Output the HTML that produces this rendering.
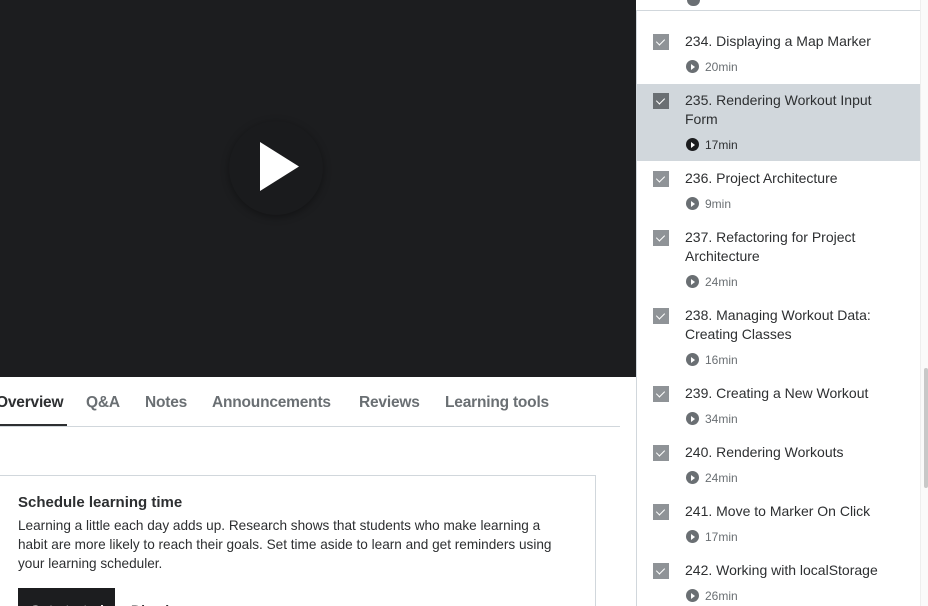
<!DOCTYPE html>
<html><head><style>
*{margin:0;padding:0;box-sizing:border-box}
html,body{width:928px;height:606px;overflow:hidden}
body{background:#fff;font-family:"Liberation Sans",sans-serif;color:#2d2f31}
#w{position:relative;width:928px;height:606px;overflow:hidden}
.a{position:absolute;white-space:nowrap}
.video{left:0;top:0;width:636px;height:377px;background:#1c1d1f}
.pc{left:229px;top:121px;width:94px;height:94px;border-radius:50%;background:#1a1b1d;box-shadow:0 2px 8px rgba(0,0,0,.35)}
.tab{top:394px;font-size:15.5px;font-weight:bold;color:#6a6f73;letter-spacing:-0.2px}
.side{left:636px;top:10px;width:285px;height:596px;border-left:1px solid #d1d7dc;border-top:1px solid #d1d7dc}
.cb{position:absolute;left:653px;width:16px;height:16px;background:#8f9397}
.cb:after{content:"";position:absolute;left:5px;top:3px;width:4px;height:7px;border:solid #fff;border-width:0 1.2px 1.2px 0;transform:rotate(45deg)}
.t{left:685px;font-size:14px;line-height:19px;color:#2d2f31;white-space:normal;width:200px}
.d{left:686px;font-size:12px;color:#6a6f73}
.d i{display:inline-block;width:13px;height:13px;border-radius:50%;background:#6a6f73;vertical-align:-2px;margin-right:6px;position:relative}
.d i:after{content:"";position:absolute;left:5px;top:3.5px;border-left:4.5px solid #fff;border-top:3px solid transparent;border-bottom:3px solid transparent}
</style></head><body><div id="w">
<div class="a video"></div>
<div class="a pc"></div>
<svg class="a" style="left:260px;top:142px" width="40" height="50"><polygon points="0,0 39,24.5 0,49" fill="#fff"/></svg>

<div class="a tab" style="left:-4px;color:#2d2f31">Overview</div>
<div class="a" style="left:0;top:424px;width:67px;height:2px;background:#2d2f31"></div>
<div class="a tab" style="left:86px">Q&amp;A</div>
<div class="a tab" style="left:145px">Notes</div>
<div class="a tab" style="left:212px">Announcements</div>
<div class="a tab" style="left:359px">Reviews</div>
<div class="a tab" style="left:445px">Learning tools</div>
<div class="a" style="left:0;top:426px;width:620px;height:1px;background:#d1d7dc"></div>

<div class="a" style="left:-2px;top:475px;width:598px;height:131px;border:1px solid #d1d7dc;border-bottom:none"></div>
<div class="a" style="left:18px;top:494px;font-size:15px;font-weight:bold">Schedule learning time</div>
<div class="a" style="left:18px;top:516px;font-size:13.6px;line-height:19px;white-space:normal;width:545px">Learning a little each day adds up. Research shows that students who make learning a habit are more likely to reach their goals. Set time aside to learn and get reminders using your learning scheduler.</div>
<div class="a" style="left:18px;top:588px;width:97px;height:18px;background:#1c1d1f;color:#fff;font-weight:bold;font-size:14px;padding:14px 0 0 12px;overflow:hidden;line-height:16px">Get started</div>
<div class="a" style="left:131px;top:602px;font-weight:bold;font-size:14px;line-height:16px">Dismiss</div>

<div class="a side"></div>
<div class="a" style="left:637px;top:84px;width:283px;height:77px;background:#d1d7dc"></div>
<div class="a" style="left:920px;top:0;width:8px;height:606px;background:#fafafa;border-left:1px solid #eee"></div>
<div class="a" style="left:924px;top:368px;width:4px;height:120px;background:#c8c8c8;border-radius:2px"></div>
<div class="a" style="left:687px;top:0;width:13px;height:6px;background:#6a6f73;border-radius:0 0 7px 7px"></div>

<div class="cb" style="top:34px"></div><div class="a t" style="top:32px">234. Displaying a Map Marker</div><div class="a d" style="top:60px"><i></i>20min</div>
<div class="cb" style="top:93px;background:#6a6f73"></div><div class="a t" style="top:91px">235. Rendering Workout Input Form</div><div class="a d" style="top:138px;color:#2d2f31"><i style="background:#1c1d1f"></i>17min</div>
<div class="cb" style="top:171px"></div><div class="a t" style="top:169px">236. Project Architecture</div><div class="a d" style="top:197px"><i></i>9min</div>
<div class="cb" style="top:230px"></div><div class="a t" style="top:228px">237. Refactoring for Project Architecture</div><div class="a d" style="top:275px"><i></i>24min</div>
<div class="cb" style="top:308px"></div><div class="a t" style="top:306px">238. Managing Workout Data: Creating Classes</div><div class="a d" style="top:353px"><i></i>16min</div>
<div class="cb" style="top:386px"></div><div class="a t" style="top:384px">239. Creating a New Workout</div><div class="a d" style="top:412px"><i></i>34min</div>
<div class="cb" style="top:445px"></div><div class="a t" style="top:443px">240. Rendering Workouts</div><div class="a d" style="top:471px"><i></i>24min</div>
<div class="cb" style="top:504px"></div><div class="a t" style="top:502px">241. Move to Marker On Click</div><div class="a d" style="top:530px"><i></i>17min</div>
<div class="cb" style="top:563px"></div><div class="a t" style="top:561px">242. Working with localStorage</div><div class="a d" style="top:589px;line-height:14px"><i></i>26min</div>
</div></body></html>
